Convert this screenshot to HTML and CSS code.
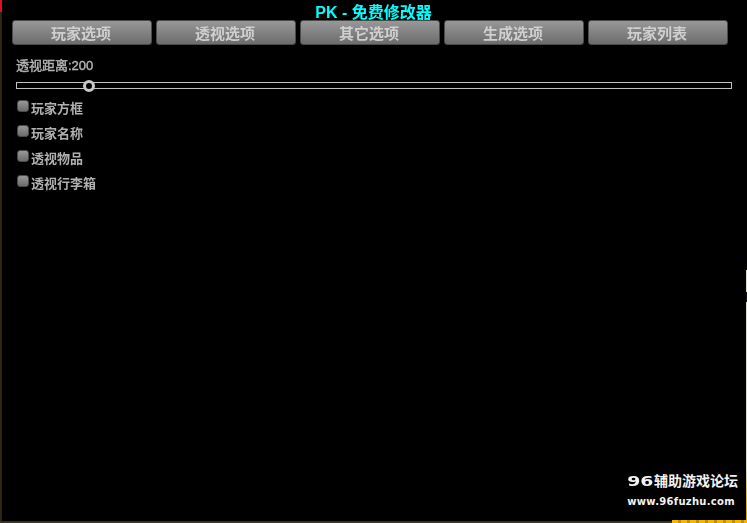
FILE: index.html
```html
<!DOCTYPE html>
<html lang="en">
<head>
    <meta charset="UTF-8">
    <title>PK</title>
    <link rel="stylesheet" href="styles.css">
</head>
<body>
    <div class="menu">
        <h1 class="title">PK - 免费修改器</h1>

        <div class="tabs">
            <button class="tab">玩家选项</button>
            <button class="tab">透视选项</button>
            <button class="tab">其它选项</button>
            <button class="tab">生成选项</button>
            <button class="tab">玩家列表</button>
        </div>

        <div class="range-label">透视距离:200</div>
        <div class="slider">
            <span class="slider-thumb"></span>
        </div>

        <ul class="options">
            <li class="option"><span class="box"></span>玩家方框</li>
            <li class="option"><span class="box"></span>玩家名称</li>
            <li class="option"><span class="box"></span>透视物品</li>
            <li class="option"><span class="box"></span>透视行李箱</li>
        </ul>
    </div>

    <div class="watermark">
        <div class="wm-name"><span class="wm-num">96</span>辅助游戏论坛</div>
        <div class="wm-url">www.96fuzhu.com</div>
    </div>

    <!-- bits of the game window showing round the overlay -->
    <div class="edge-left"></div>
    <div class="edge-bottom"></div>
    <div class="edge-right"></div>
    <div class="corner-red"></div>
    <div class="corner-yellow"></div>
</body>
</html>
```

FILE: styles.css
```css
html {
    height: 100%;
    overflow: hidden;
}

body {
    position: relative;
    margin: 0;
    height: 100%;
    padding: 0 0 2px 2px;
    background-color: #000;
    box-sizing: border-box;
    font-family: "Liberation Sans", "Noto Sans CJK SC", sans-serif;
    color: #b4b4b4;
}

.menu {
    padding: 0 17px 0 10px;
    filter: blur(0.3px);
}

.title {
    margin: 0;
    height: 20px;
    padding: 4px 0 0 5px;
    box-sizing: border-box;
    line-height: 18px;
    font-size: 16px;
    font-weight: bold;
    text-align: center;
    color: #00ffff;
    white-space: nowrap;
}

.tabs {
    display: flex;
    gap: 4px;
}

.tab {
    width: 140px;
    height: 25px;
    padding: 0 2px 1px 0;
    border: 1px solid #4a4a4a;
    border-radius: 3px;
    background: linear-gradient(#989898, #6c6c6c);
    font-family: inherit;
    font-size: 15px;
    font-weight: bold;
    color: #cfcfcf;
}

.range-label {
    margin: 12px 0 0 4px;
    height: 17px;
    line-height: 17px;
    font-size: 13px;
    -webkit-text-stroke: 0.4px #b4b4b4;
}

.slider {
    position: relative;
    margin: 8px 0 0 4px;
    width: 714px;
    height: 5px;
    border: 1px solid #c0c0c0;
}

.slider-thumb {
    position: absolute;
    left: 66px;
    top: -3px;
    width: 6px;
    height: 6px;
    border: 3px solid #c8c8c8;
    border-radius: 50%;
    background-color: #000;
}

.options {
    list-style-type: none;
    margin: 10px 0 0 5px;
    padding: 0;
}

.option {
    display: flex;
    align-items: flex-start;
    height: 25px;
    line-height: 20px;
    font-size: 13px;
    font-weight: bold;
    color: #b0b0b0;
}

.box {
    width: 10px;
    height: 10px;
    margin: 1px 2px 0 0;
    border-radius: 3px;
    background: linear-gradient(#989898, #6c6c6c);
    border: 1px solid #4a4a4a;
}

.watermark {
    position: absolute;
    right: 9px;
    bottom: 15px;
    text-align: right;
    color: #f2f2f2;
    font-weight: bold;
}

.wm-name {
    font-family: "DejaVu Sans", "Noto Sans CJK SC", sans-serif;
    font-size: 14px;
    line-height: 17px;
    white-space: nowrap;
}

.wm-num {
    display: inline-block;
    margin-right: 1px;
    transform: scaleX(1.35);
    transform-origin: right;
}

.wm-url {
    margin: 5px 3px 0 0;
    font-family: "DejaVu Sans", sans-serif;
    font-size: 10px;
    letter-spacing: 0.3px;
    line-height: 13px;
}

.edge-left {
    position: absolute;
    left: 0;
    top: 0;
    bottom: 0;
    width: 2px;
    background-color: #2b2618;
}

.edge-bottom {
    position: absolute;
    left: 0;
    right: 0;
    bottom: 0;
    height: 2px;
    background-color: #3a3320;
}

.edge-right {
    position: absolute;
    right: 0;
    top: 270px;
    bottom: 0;
    width: 1px;
    background: linear-gradient(#d8dcc8 22px, #111 22px, #111 32px, #d8dcc8 32px, #d8dcc8 200px, #e0ac00 240px);
}

.corner-red {
    position: absolute;
    left: 0;
    top: 0;
    width: 2px;
    height: 12px;
    background-color: #e01020;
}

.corner-yellow {
    position: absolute;
    right: 0;
    bottom: 0;
    width: 75px;
    height: 3px;
    background: repeating-linear-gradient(90deg, #f0b800 0, #f0b800 6px, #c09000 6px, #c09000 9px);
}
```
